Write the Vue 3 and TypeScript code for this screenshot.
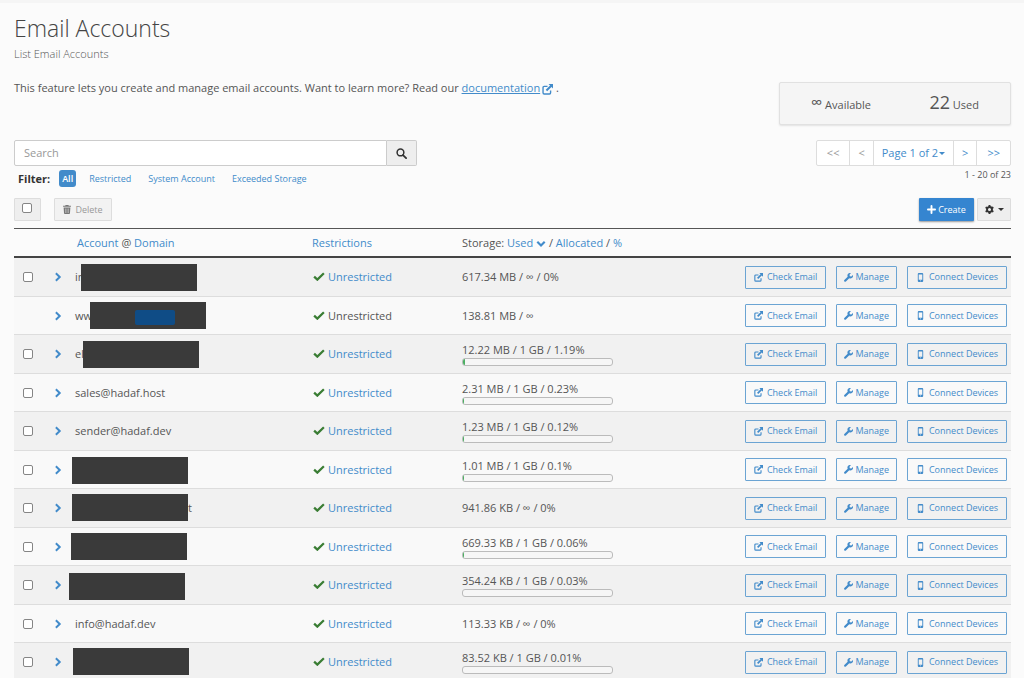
<script setup lang="ts">
import { ref, computed } from 'vue'

interface Mask {
  left: number
  top: number
  highlight?: boolean
}

interface Account {
  id: number
  name: string
  suffix?: string
  mask?: Mask
  system?: boolean
  storage: string
  percent?: number
}

const accounts: Account[] = [
  { id: 1, name: 'in', mask: { left: 6, top: 0 }, storage: '617.34 MB / ∞ / 0%' },
  { id: 2, name: 'ww', mask: { left: 15, top: -1, highlight: true }, system: true, storage: '138.81 MB / ∞' },
  { id: 3, name: 'el', mask: { left: 8, top: 0 }, storage: '12.22 MB / 1 GB / 1.19%', percent: 1.19 },
  { id: 4, name: 'sales@hadaf.host', storage: '2.31 MB / 1 GB / 0.23%', percent: 0.23 },
  { id: 5, name: 'sender@hadaf.dev', storage: '1.23 MB / 1 GB / 0.12%', percent: 0.12 },
  { id: 6, name: '', mask: { left: -3, top: 0 }, storage: '1.01 MB / 1 GB / 0.1%', percent: 0.1 },
  { id: 7, name: '', suffix: 't', mask: { left: -3, top: -1 }, storage: '941.86 KB / ∞ / 0%' },
  { id: 8, name: '', mask: { left: -4, top: -1 }, storage: '669.33 KB / 1 GB / 0.06%', percent: 0.06 },
  { id: 9, name: '', mask: { left: -6, top: 1 }, storage: '354.24 KB / 1 GB / 0.03%', percent: 0.03 },
  { id: 10, name: 'info@hadaf.dev', storage: '113.33 KB / ∞ / 0%' },
  { id: 11, name: '', mask: { left: -2, top: -1 }, storage: '83.52 KB / 1 GB / 0.01%', percent: 0.01 },
]

const filters = ['All', 'Restricted', 'System Account', 'Exceeded Storage']
const activeFilter = ref('All')
const query = ref('')
const selected = ref<number[]>([])

const selectable = accounts.filter((a) => !a.system).map((a) => a.id)
const allSelected = computed({
  get: () => selected.value.length === selectable.length,
  set: (on: boolean) => {
    selected.value = on ? [...selectable] : []
  },
})

const maskStyle = (m: Mask) => ({ left: `${m.left}px`, marginTop: `${m.top}px` })
</script>

<template>
  <main class="page">
    <h1>Email Accounts</h1>
    <p class="subtitle">List Email Accounts</p>

    <div class="intro">
      <p class="lead">
        This feature lets you create and manage email accounts. Want to learn more? Read our
        <a href="#docs" class="doc">documentation</a>
        <svg class="ext" viewBox="0 0 16 16" aria-hidden="true">
          <path d="M8 3.5H3.2A1.7 1.7 0 0 0 1.5 5.2v7.6a1.7 1.7 0 0 0 1.7 1.7h7.6a1.7 1.7 0 0 0 1.7-1.7V9.5" fill="none" stroke="currentColor" stroke-width="2" />
          <path d="M9.5 0H16v6.5l-2.2-2.2-6.3 6.3-2.1-2.1 6.3-6.3z" fill="currentColor" />
        </svg>
        .
      </p>
      <div class="stats">
        <div><span class="inf">∞</span> Available</div>
        <div><span class="big">22</span> Used</div>
      </div>
    </div>

    <div class="tools">
      <div>
        <form class="search" role="search" @submit.prevent>
          <input v-model="query" type="text" placeholder="Search" aria-label="Search" />
          <button type="submit" aria-label="Search">
            <svg viewBox="0 0 16 16" aria-hidden="true">
              <circle cx="6.5" cy="6.5" r="4.9" fill="none" stroke="currentColor" stroke-width="2.2" />
              <path d="M10.2 10.2 14.7 14.7" stroke="currentColor" stroke-width="2.6" stroke-linecap="round" />
            </svg>
          </button>
        </form>
        <div class="filters">
          <strong>Filter:</strong>
          <button
            v-for="f in filters"
            :key="f"
            type="button"
            :class="{ active: f === activeFilter }"
            @click="activeFilter = f"
          >{{ f }}</button>
        </div>
      </div>
      <div class="paging">
        <nav class="pager" aria-label="Pages">
          <button type="button" disabled>&lt;&lt;</button>
          <button type="button" disabled>&lt;</button>
          <button type="button" class="current">Page 1 of 2<i class="caret"></i></button>
          <button type="button">&gt;</button>
          <button type="button">&gt;&gt;</button>
        </nav>
        <p class="range">1 - 20 of 23</p>
      </div>
    </div>

    <div class="bulk">
      <label class="pick-all"><input v-model="allSelected" type="checkbox" aria-label="Select all accounts" /></label>
      <button type="button" class="plain delete" disabled>
        <svg viewBox="0 0 14 16" aria-hidden="true">
          <path d="M4.5 0h5l.7 1.3H14v2H0v-2h3.8z" fill="currentColor" />
          <path fill-rule="evenodd" d="M1 4.3h12l-.7 10.3A1.5 1.5 0 0 1 10.8 16H3.2a1.5 1.5 0 0 1-1.5-1.4zM4 6v8h.7V6zm2.6 0v8h.8V6zM9.3 6v8h.7V6z" fill="currentColor" />
        </svg>
        Delete
      </button>
      <span class="spacer"></span>
      <button type="button" class="create">
        <svg viewBox="0 0 16 16" aria-hidden="true">
          <path d="M8 1.7v12.6M1.7 8h12.6" stroke="currentColor" stroke-width="3.4" stroke-linecap="round" />
        </svg>
        Create
      </button>
      <button type="button" class="plain gear" aria-label="Settings">
        <svg viewBox="0 0 16 16" aria-hidden="true">
          <circle cx="8" cy="8" r="4.4" fill="none" stroke="currentColor" stroke-width="3.4" />
          <path d="M8 0v3.5M8 12.5V16M1.1 4l3 1.7M11.9 10.3l3 1.7M1.1 12l3-1.7M11.9 5.7l3-1.7" stroke="currentColor" stroke-width="3.4" />
        </svg>
        <i class="caret"></i>
      </button>
    </div>

    <table>
      <colgroup>
        <col class="c-pick" />
        <col class="c-open" />
        <col class="c-account" />
        <col class="c-restrict" />
        <col class="c-storage" />
        <col />
      </colgroup>
      <thead>
        <tr>
          <th></th>
          <th></th>
          <th class="h-account"><a href="#account">Account</a> @ <a href="#domain">Domain</a></th>
          <th><a href="#restrictions">Restrictions</a></th>
          <th>
            Storage: <a href="#used">Used
              <svg class="sort" viewBox="0 0 14 10" aria-hidden="true">
                <path d="M1.8 2 7 7.2 12.2 2" fill="none" stroke="currentColor" stroke-width="3" />
              </svg></a>
            / <a href="#allocated">Allocated</a> / <a href="#percent">%</a>
          </th>
          <th></th>
        </tr>
      </thead>
      <tbody>
        <tr v-for="a in accounts" :key="a.id">
          <td class="pick">
            <input v-if="!a.system" v-model="selected" type="checkbox" :value="a.id" aria-label="Select account" />
          </td>
          <td class="open">
            <button type="button" aria-label="Show details">
              <svg viewBox="0 0 10 14" aria-hidden="true">
                <path d="M2 1.8 7.4 7 2 12.2" fill="none" stroke="currentColor" stroke-width="2.8" />
              </svg>
            </button>
          </td>
          <td class="account">
            <div class="name">
              {{ a.name }}<span v-if="a.suffix" class="suffix">{{ a.suffix }}</span>
              <span v-if="a.mask" class="mask" :style="maskStyle(a.mask)"><i v-if="a.mask.highlight"></i></span>
            </div>
          </td>
          <td class="restriction">
            <svg class="check" viewBox="0 0 16 12" aria-hidden="true">
              <path d="M1.5 6.2 5.8 10.2 14.5 1.7" fill="none" stroke="currentColor" stroke-width="3" />
            </svg>
            <span v-if="a.system">Unrestricted</span>
            <a v-else href="#restrict">Unrestricted</a>
          </td>
          <td class="storage">
            <div>{{ a.storage }}</div>
            <div v-if="a.percent !== undefined" class="bar"><i :style="{ width: a.percent + '%' }"></i></div>
          </td>
          <td>
            <div class="actions">
              <button type="button">
                <svg viewBox="0 0 16 16" aria-hidden="true">
                  <path d="M8 3.5H3.2A1.7 1.7 0 0 0 1.5 5.2v7.6a1.7 1.7 0 0 0 1.7 1.7h7.6a1.7 1.7 0 0 0 1.7-1.7V9.5" fill="none" stroke="currentColor" stroke-width="2" />
                  <path d="M9.5 0H16v6.5l-2.2-2.2-6.3 6.3-2.1-2.1 6.3-6.3z" fill="currentColor" />
                </svg>
                Check Email
              </button>
              <button type="button" class="manage">
                <svg viewBox="0 0 16 16" aria-hidden="true">
                  <path d="M15.9 3.6a4.8 4.8 0 0 1-6.6 5.8L3.4 15.2a2 2 0 0 1-2.8-2.8l5.9-5.8A4.8 4.8 0 0 1 12.4.2L9.8 3l.5 2.8 2.8.5z" fill="currentColor" />
                </svg>
                Manage
              </button>
              <button type="button">
                <svg viewBox="0 0 10 16" aria-hidden="true">
                  <path fill-rule="evenodd" d="M2 0h6a1.8 1.8 0 0 1 1.8 1.8v12.4A1.8 1.8 0 0 1 8 16H2a1.8 1.8 0 0 1-1.8-1.8V1.8A1.8 1.8 0 0 1 2 0zM1.8 2.5v9.7h6.4V2.5zM4.2 13.3v1.4h1.6v-1.4z" fill="currentColor" />
                </svg>
                Connect Devices
              </button>
            </div>
          </td>
        </tr>
      </tbody>
    </table>
  </main>
</template>

<style>
html {
  background: #fbfbfb;
}
body {
  overflow: hidden;
}
</style>

<style scoped>
* {
  box-sizing: border-box;
}
.page {
  border-top: 3px solid #f5f5f5;
  padding: 9px 13px 0 14px;
  font-family: "Open Sans", "Noto Sans", sans-serif;
  font-size: 11px;
  line-height: 16px;
  color: #555;
}
button,
input {
  font: inherit;
  color: inherit;
  margin: 0;
}
button {
  padding: 0;
  border: 0;
  background: none;
  cursor: pointer;
  white-space: nowrap;
}
p,
h1 {
  margin: 0;
}
a {
  color: #428bca;
  text-decoration: none;
}
h1 {
  font-size: 23px;
  line-height: 32px;
  font-weight: 300;
  color: #444;
}
.subtitle {
  margin-top: 2px;
  font-weight: 300;
  color: #555;
}
.intro {
  display: flex;
  justify-content: space-between;
  align-items: flex-start;
  margin-top: 18px;
}
.doc {
  text-decoration: underline;
}
.ext {
  width: 11px;
  height: 11px;
  margin-left: 2px;
  vertical-align: -3px;
  color: #428bca;
}
.stats {
  display: flex;
  width: 232px;
  height: 43px;
  margin-top: 2px;
  padding: 0 31px;
  justify-content: space-between;
  align-items: center;
  background: #f5f5f5;
  border: 1px solid #e1e1e1;
  border-radius: 2px;
  box-shadow: 0 1px 2px rgba(0, 0, 0, 0.1);
}
.big {
  font-size: 18px;
}
.inf {
  font-size: 16px;
  vertical-align: 1px;
}
.tools {
  display: flex;
  justify-content: space-between;
  margin-top: 15px;
}
.search {
  display: flex;
  width: 403px;
  height: 26px;
}
.search input {
  flex: 1;
  min-width: 0;
  padding: 0 9px;
  border: 1px solid #ccc;
  border-radius: 2px 0 0 2px;
  background: #fff;
  outline: 0;
}
.search input::placeholder {
  color: #999;
  opacity: 1;
}
.search button {
  width: 30px;
  border: 1px solid #ccc;
  border-left: 0;
  border-radius: 0 2px 2px 0;
  background: #eee;
  color: #333;
}
.search svg {
  display: block;
  width: 11px;
  height: 11px;
  margin: 0 auto;
}
.filters {
  display: flex;
  align-items: center;
  margin-top: 4px;
  padding-left: 4px;
  font-size: 9px;
}
.filters strong {
  margin-right: 6px;
  font-size: 11px;
  color: #333;
}
.filters button {
  height: 17px;
  margin-left: 3px;
  margin-right: 6px;
  padding: 0 4px;
  border-radius: 3px;
  color: #428bca;
}
.filters .active {
  padding: 0 3px;
  background: #428bca;
  color: #fff;
  font-weight: 600;
}
.pager {
  display: flex;
  height: 26px;
  border: 1px solid #ddd;
  border-radius: 2px;
  background: #fff;
}
.pager button {
  padding: 0 8px;
  color: #428bca;
}
.pager button:first-child,
.pager button:last-child {
  padding: 0 10px;
}
.pager button + button {
  border-left: 1px solid #ddd;
}
.pager button:disabled {
  color: #999;
}
.caret {
  display: inline-block;
  margin-left: 1px;
  border: 3px solid transparent;
  border-top-color: currentColor;
  border-bottom: 0;
  vertical-align: 2px;
}
.range {
  margin-top: 1px;
  text-align: right;
  font-size: 9px;
}
.bulk {
  display: flex;
  align-items: flex-start;
  margin-top: 11px;
  height: 30px;
}
.pick-all {
  width: 27px;
  height: 23px;
  padding: 4px 7px;
  border: 1px solid #ddd;
  border-radius: 1px;
  background: #eee;
}
input[type='checkbox'] {
  appearance: none;
  display: block;
  width: 10px;
  height: 10px;
  border: 1px solid #858585;
  border-radius: 2px;
  background: #fff;
}
input[type='checkbox']:checked {
  background: #428bca;
}
.plain,
.create,
.actions button {
  display: flex;
  align-items: center;
  justify-content: center;
  gap: 4px;
  height: 23px;
  font-size: 9px;
  border-radius: 1px;
}
.plain {
  border: 1px solid #ddd;
  background: #eee;
}
.plain svg,
.create svg,
.actions svg {
  width: 9px;
  height: 9px;
}
.delete {
  width: 58px;
  margin-left: 13px;
  color: #999;
  background: #f2f2f2;
}
.delete svg {
  width: 8px;
  color: #777;
}
.spacer {
  flex: 1;
}
.create {
  width: 55px;
  gap: 2px;
  margin-right: 3px;
  background: #3585d0;
  color: #fff;
  box-shadow: 0 1px 2px rgba(0, 0, 0, 0.4);
}
.gear {
  width: 34px;
  color: #333;
}
.gear .caret {
  margin: 0;
}
table {
  width: 100%;
  table-layout: fixed;
  border-collapse: separate;
  border-spacing: 0;
  border-top: 1px solid #555;
}
.c-pick {
  width: 29px;
}
.c-open {
  width: 32px;
}
.c-account {
  width: 237px;
}
.c-restrict {
  width: 150px;
}
.c-storage {
  width: 240px;
}
th {
  height: 29px;
  padding: 0;
  border-bottom: 2px solid #444;
  text-align: left;
  font-weight: 400;
}
.h-account {
  padding-left: 2px;
}
.sort {
  width: 10px;
  height: 8px;
  vertical-align: -1px;
}
td {
  height: 39px;
  padding: 0;
  border-bottom: 1px solid #ddd;
  vertical-align: middle;
}
tbody tr:nth-child(odd) {
  background: #f1f1f1;
}
tbody tr:nth-child(even) {
  background: #f9f9f9;
}
tbody tr:nth-child(even) td {
  height: 38px;
}
.pick input {
  margin-left: 9px;
}
.open button {
  display: block;
  margin-left: 11px;
  color: #428bca;
}
.open svg {
  display: block;
  width: 8px;
  height: 10px;
}
.name {
  position: relative;
  height: 16px;
}
.mask {
  position: absolute;
  top: -5px;
  width: 116px;
  height: 27px;
  background: #3a3a3a;
}
.mask i {
  display: block;
  width: 40px;
  height: 15px;
  margin: 8px 0 0 45px;
  border-radius: 2px;
  background: #0f4c86;
}
.suffix {
  margin-left: 113px;
}
.check {
  width: 12px;
  height: 9px;
  margin-left: 1px;
  margin-right: 3px;
  color: #3a7d34;
}
.bar {
  width: 151px;
  height: 8px;
  border: 1px solid #bbb;
  border-radius: 3px;
  background: #f6f6f6;
  overflow: hidden;
}
.bar i {
  display: block;
  height: 6px;
  background: #4caf63;
}
.actions {
  display: flex;
  justify-content: flex-end;
  gap: 10px;
  padding-right: 4px;
}
.actions button {
  padding: 0 8px;
  border: 1px solid #6ba4d3;
  color: #428bca;
}
.actions .manage {
  gap: 2px;
  padding: 0 7px;
}
</style>
